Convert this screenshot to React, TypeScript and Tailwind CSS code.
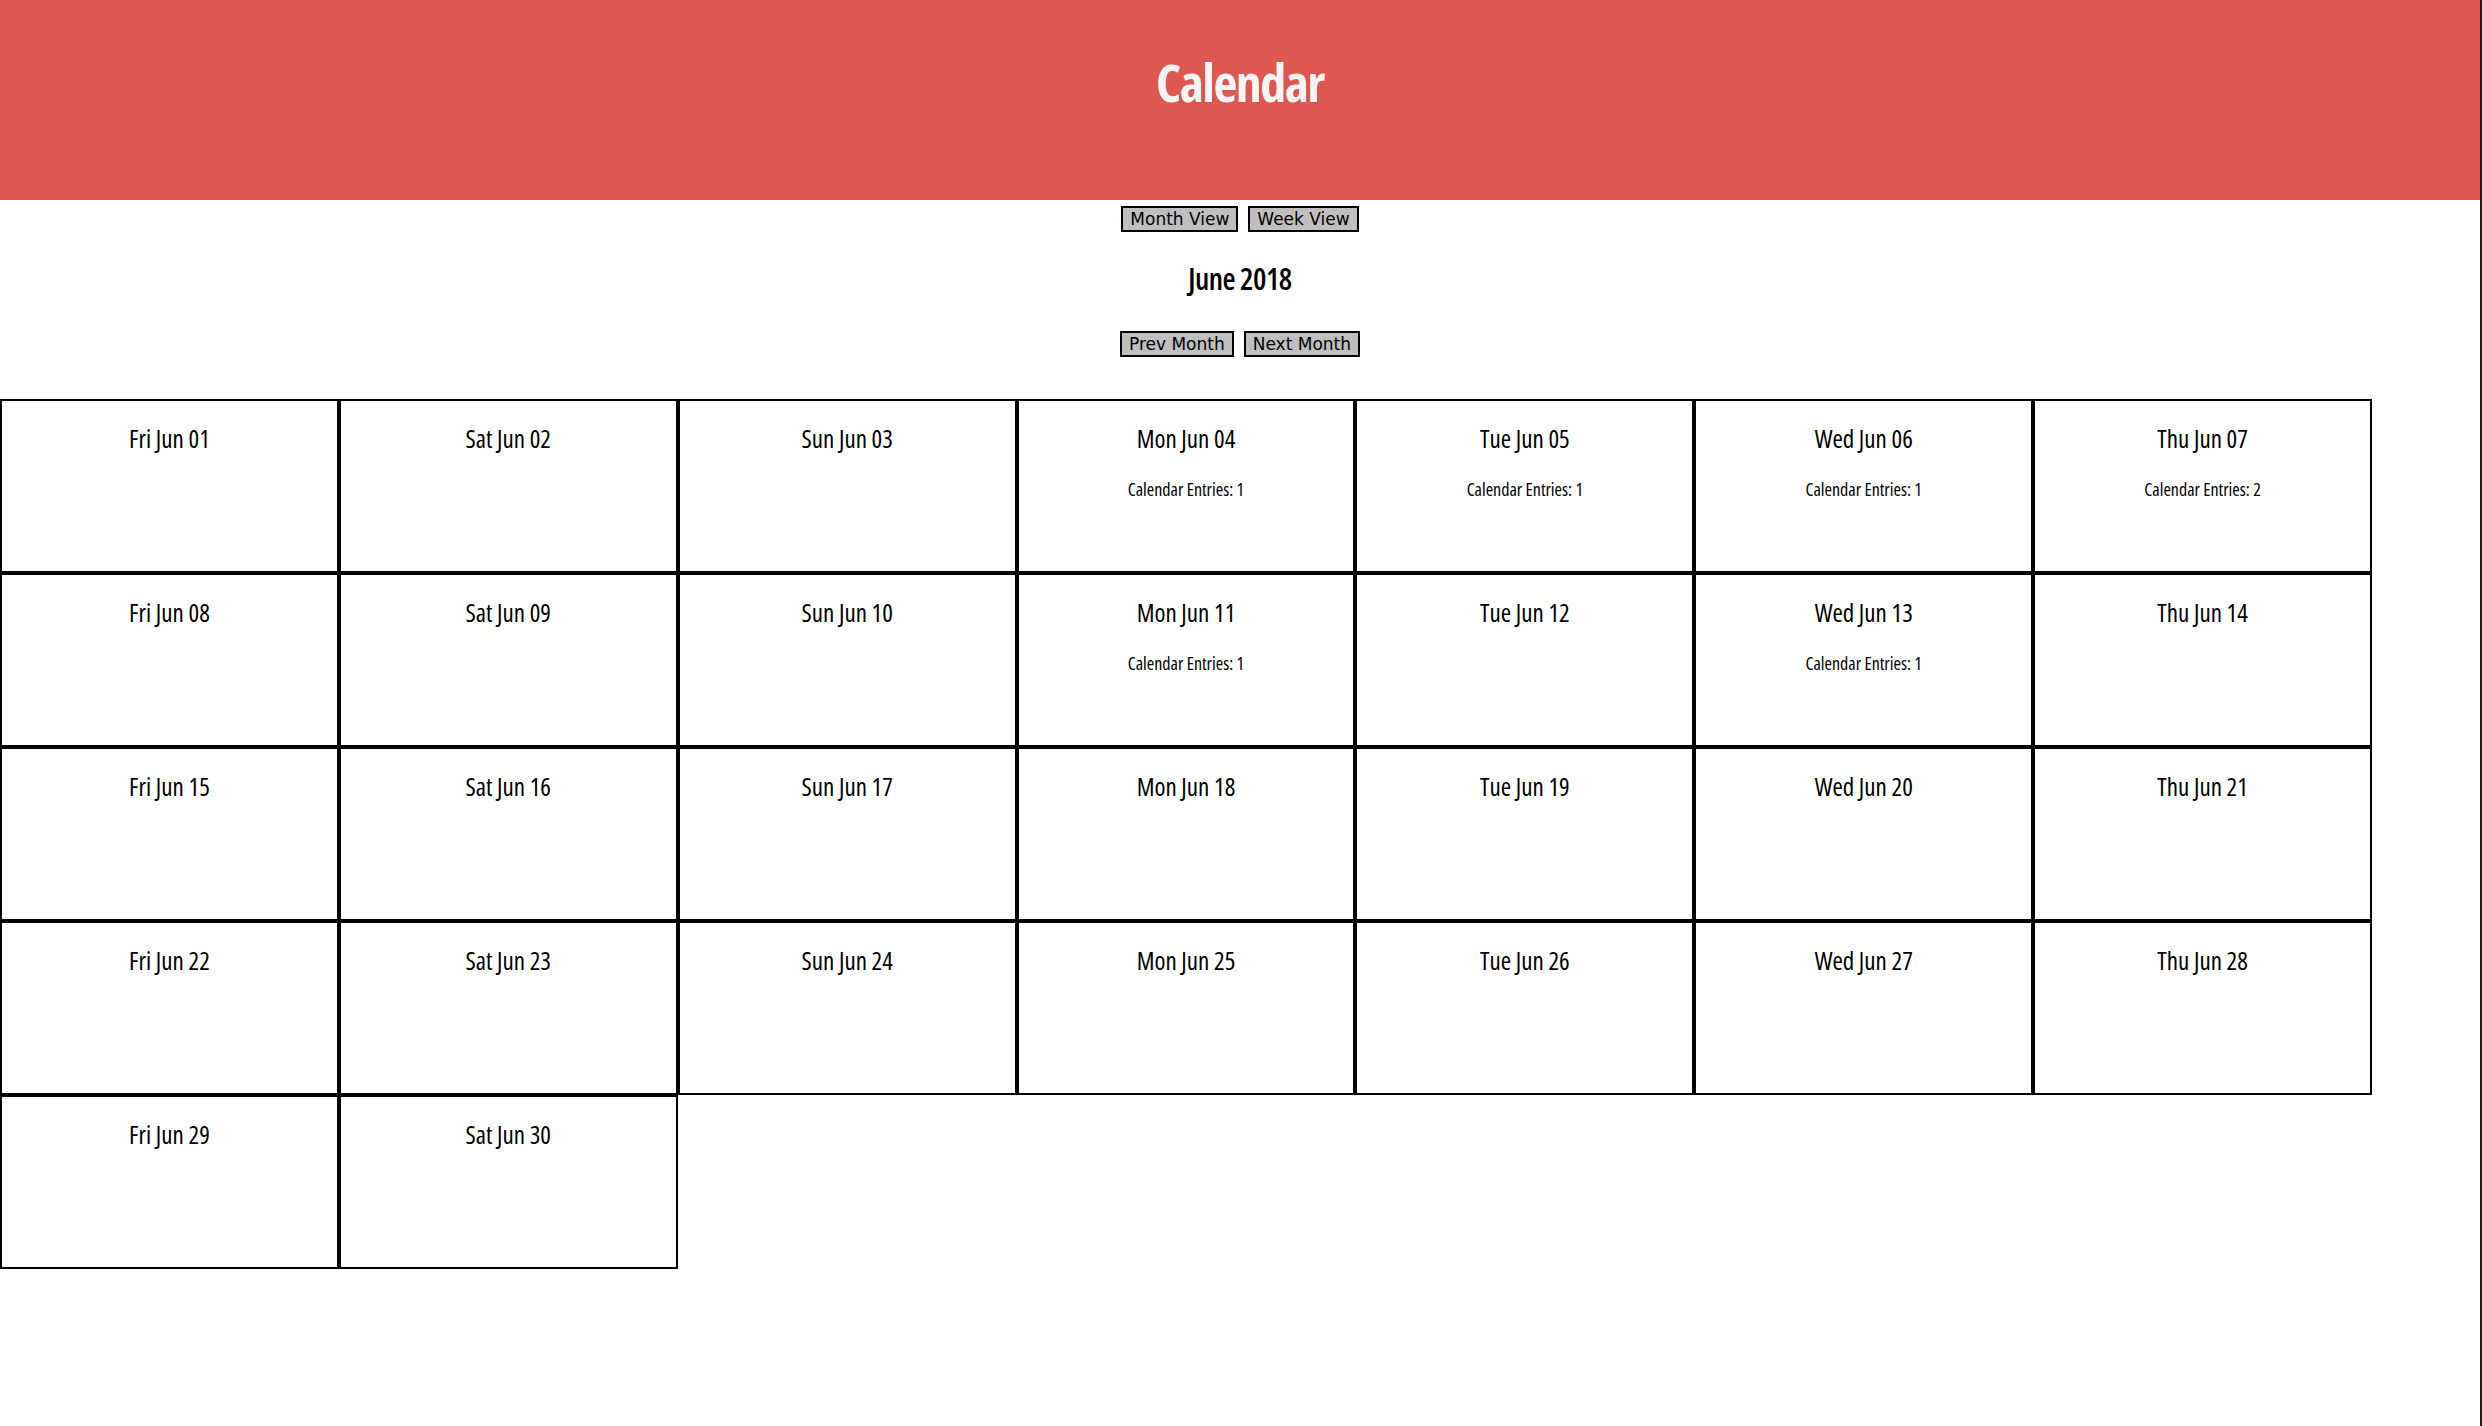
const DAYS = ['Fri', 'Sat', 'Sun', 'Mon', 'Tue', 'Wed', 'Thu'];

const ENTRIES: Record<number, number> = { 4: 1, 5: 1, 6: 1, 7: 2, 11: 1, 13: 1 };

const narrow = { fontFamily: '"Open Sans", "Noto Sans", "DejaVu Sans Condensed", sans-serif' };

function NavButton({ label }: { label: string }) {
  return (
    <button
      className="h-[26px] px-[7px] border-2 border-black bg-[#bfbfbf] text-[17px] leading-[20px] text-black"
      style={{ fontFamily: '"DejaVu Sans", Verdana, sans-serif' }}
    >
      {label}
    </button>
  );
}

function DayCell({ day }: { day: number }) {
  const name = DAYS[(day - 1) % 7];
  const count = ENTRIES[day];
  return (
    <div className="h-[174px] border-2 border-black text-center text-black pt-[22px] font-stretch-condensed" style={narrow}>
      <div className="text-[25px] leading-[30px]">
        {name} Jun {String(day).padStart(2, '0')}
      </div>
      {count && <div className="mt-[25px] text-[18px] leading-[22px]">Calendar Entries: {count}</div>}
    </div>
  );
}

export default function App() {
  const days = Array.from({ length: 30 }, (_, i) => i + 1);
  return (
    <div className="min-h-screen w-full bg-white border-r-2 border-[#1c1c1c]">
      {/* Header */}
      <header className="h-[200px] bg-[#dd5850] flex justify-center pt-[50px]">
        <h1
          className="text-[52px] leading-[64px] font-bold text-[#f5f5f5] tracking-[-1.5px] font-stretch-condensed"
          style={narrow}
        >
          Calendar
        </h1>
      </header>

      {/* Controls */}
      <div className="flex justify-center gap-[10px] pt-[6px]">
        <NavButton label="Month View" />
        <NavButton label="Week View" />
      </div>
      <h2
        className="text-center text-[30px] leading-[36px] font-semibold text-black mt-[29px] tracking-[-0.5px] font-stretch-condensed"
        style={narrow}
      >
        June 2018
      </h2>
      <div className="flex justify-center gap-[10px] mt-[34px]">
        <NavButton label="Prev Month" />
        <NavButton label="Next Month" />
      </div>

      {/* Month grid */}
      <div className="grid grid-cols-7 w-[2372px] mt-[42px]">
        {days.map((d) => (
          <DayCell key={d} day={d} />
        ))}
      </div>
    </div>
  );
}
